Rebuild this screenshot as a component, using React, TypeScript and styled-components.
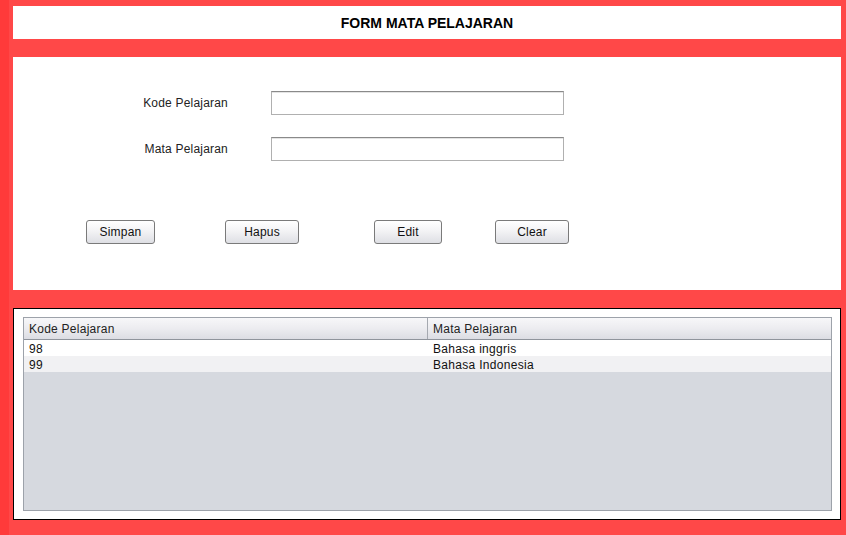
import React from "react";
import styled, { createGlobalStyle } from "styled-components";

const Global = createGlobalStyle`
  html, body { margin: 0; padding: 0; }
  body { background: #ff4848; font-family: "Liberation Sans", Arial, sans-serif; }
  * { box-sizing: border-box; }
`;

const Page = styled.div`
  width: 846px;
  height: 535px;
  display: flex;
  background: #ff4848;
  overflow: hidden;
`;

const Strip = styled.div`
  width: 9px;
  flex: none;
  background: #ff3a3a;
`;

const Main = styled.div`
  flex: 1;
  display: flex;
  flex-direction: column;
  gap: 18px;
  padding: 6px 5px 0 4px;
`;

const Header = styled.div`
  height: 33px;
  background: #ffffff;
  display: flex;
  align-items: center;
  justify-content: center;
`;

const Title = styled.h1`
  margin: 0;
  font-family: "Liberation Sans", Arial, sans-serif;
  font-weight: bold;
  font-size: 14px;
  color: #000;
`;

const FormPanel = styled.div`
  height: 233px;
  background: #ffffff;
  padding-top: 34px;
`;

const FieldGrid = styled.div`
  display: grid;
  grid-template-columns: 215px 293px;
  column-gap: 43px;
  row-gap: 22px;
  grid-auto-rows: 24px;
  align-items: center;
`;

const Label = styled.label`
  text-align: right;
  font-size: 12px;
  letter-spacing: 0.2px;
  color: #222;
`;

const Input = styled.input`
  width: 293px;
  height: 24px;
  margin: 0;
  border: 1px solid #b0b0b0;
  border-top-color: #8a8a8a;
  box-shadow: inset 0 1px 0 #e4e4e4;
  background: #fff;
  outline: none;
  font-size: 12px;
  font-family: "Liberation Sans", Arial, sans-serif;
`;

const ButtonRow = styled.div`
  display: flex;
  margin-top: 59px;
  padding-left: 73px;
`;

const Button = styled.button<{ $w: number; $ml: number }>`
  width: ${(p) => p.$w}px;
  height: 24px;
  margin: 0 0 0 ${(p) => p.$ml}px;
  padding: 0;
  border: 1px solid #7a7a7a;
  border-radius: 3px;
  background: linear-gradient(#ffffff 0%, #f3f3f5 45%, #dedfe4 100%);
  font-family: "Liberation Sans", Arial, sans-serif;
  font-size: 12px;
  letter-spacing: 0.2px;
  color: #111;
`;

const TablePanel = styled.div`
  height: 212px;
  background: #ffffff;
  border: 1px solid #000;
  padding: 8px 8px 8px 9px;
`;

const Pane = styled.div`
  height: 100%;
  border: 1px solid #9da2aa;
  background: #d6d9df;
  display: flex;
  flex-direction: column;
`;

const HeadRow = styled.div`
  display: grid;
  grid-template-columns: 404px 1fr;
  height: 22px;
  background: linear-gradient(#f7f7f9 0%, #ececf0 50%, #dcdde3 100%);
  border-bottom: 1px solid #8f949c;
`;

const HeadCell = styled.div<{ $last?: boolean }>`
  display: flex;
  align-items: center;
  padding-left: 5px;
  font-size: 12px;
  letter-spacing: 0.25px;
  color: #222;
  border-right: ${(p) => (p.$last ? "none" : "1px solid #a5a9b0")};
`;

const Row = styled.div<{ $alt?: boolean }>`
  display: grid;
  grid-template-columns: 404px 1fr;
  height: 16px;
  background: ${(p) => (p.$alt ? "#f1f1f3" : "#ffffff")};
`;

const Cell = styled.div`
  display: flex;
  align-items: center;
  padding: 1px 0 0 5px;
  font-size: 12px;
  letter-spacing: 0.3px;
  color: #111;
`;

const rows = [
  ["98", "Bahasa inggris"],
  ["99", "Bahasa Indonesia"],
];

export default function App() {
  return (
    <Page>
      <Global />
      <Strip />
      <Main>
        <Header>
          <Title>FORM MATA PELAJARAN</Title>
        </Header>
        <FormPanel>
          <FieldGrid>
            <Label>Kode Pelajaran</Label>
            <Input />
            <Label>Mata Pelajaran</Label>
            <Input />
          </FieldGrid>
          <ButtonRow>
            <Button $w={69} $ml={0}>Simpan</Button>
            <Button $w={74} $ml={70}>Hapus</Button>
            <Button $w={68} $ml={75}>Edit</Button>
            <Button $w={74} $ml={53}>Clear</Button>
          </ButtonRow>
        </FormPanel>
        <TablePanel>
          <Pane>
            <HeadRow>
              <HeadCell>Kode Pelajaran</HeadCell>
              <HeadCell $last>Mata Pelajaran</HeadCell>
            </HeadRow>
            {rows.map((r, i) => (
              <Row key={i} $alt={i % 2 === 1}>
                <Cell>{r[0]}</Cell>
                <Cell>{r[1]}</Cell>
              </Row>
            ))}
          </Pane>
        </TablePanel>
      </Main>
    </Page>
  );
}
